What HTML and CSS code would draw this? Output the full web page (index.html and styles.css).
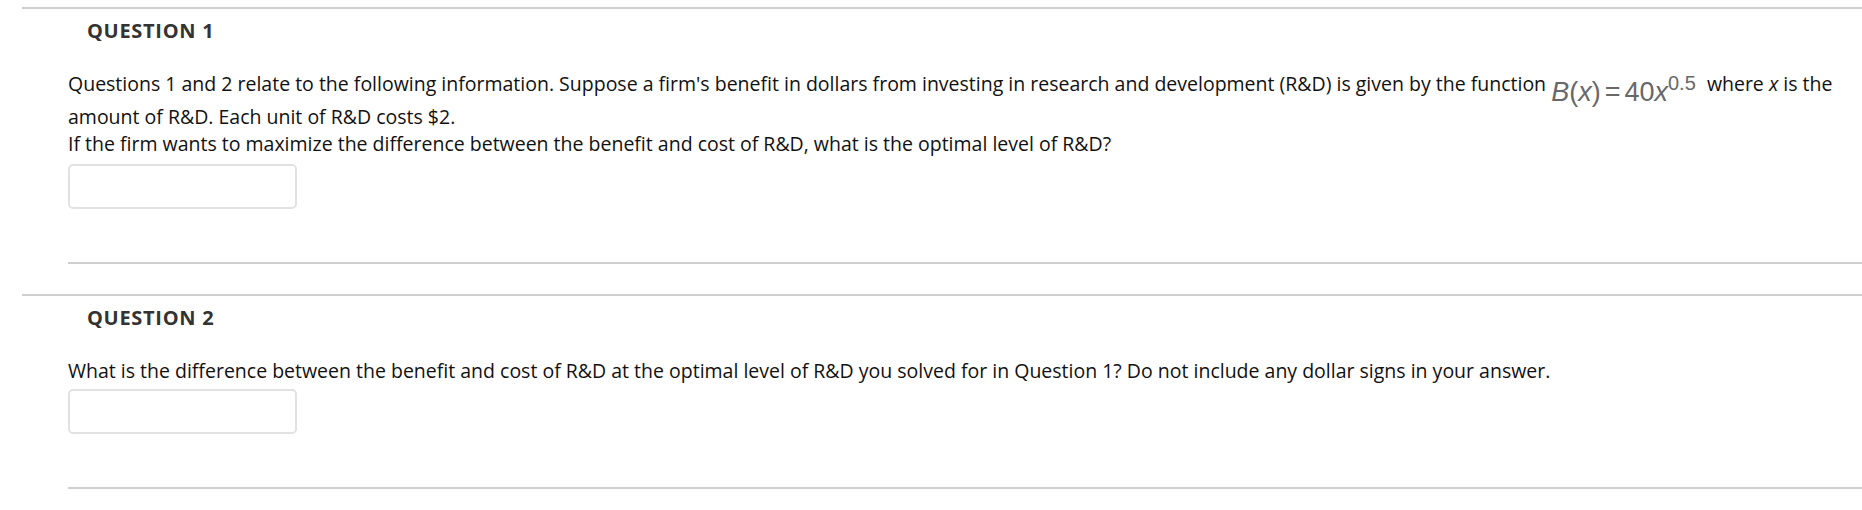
FILE: index.html
```html
<!DOCTYPE html>
<html lang="en">
<head>
<meta charset="utf-8">
<title>Questions</title>
<link rel="stylesheet" href="styles.css">
</head>
<body>
  <section class="question">
    <h3 class="q-title">QUESTION 1</h3>
    <div class="q-body">
      <p class="q-line">Questions 1 and 2 relate to the following information. Suppose a firm's benefit in dollars from investing in research and development (R&amp;D) is given by the function <span class="math"><i>B</i>(<i>x</i>)<span class="eq">=</span>40<i>x</i><sup class="exp">0.5</sup></span> where <i>x</i> is the amount of R&amp;D. Each unit of R&amp;D costs $2.</p>
      <p class="q-line q-line-next">If the firm wants to maximize the difference between the benefit and cost of R&amp;D, what is the optimal level of R&amp;D?</p>
      <input class="answer" type="text" aria-label="Answer to question 1">
      <div class="q-sep"></div>
    </div>
  </section>
  <section class="question">
    <h3 class="q-title">QUESTION 2</h3>
    <div class="q-body">
      <p class="q-line">What is the difference between the benefit and cost of R&amp;D at the optimal level of R&amp;D you solved for in Question 1? Do not include any dollar signs in your answer.</p>
      <input class="answer answer-2" type="text" aria-label="Answer to question 2">
      <div class="q-sep"></div>
    </div>
  </section>
</body>
</html>
```

FILE: styles.css
```css
html, body {
  margin: 0;
  padding: 0;
  background: #ffffff;
}

body {
  font-family: "Open Sans", "Noto Sans", sans-serif;
  color: #111111;
  padding-top: 7px;
}

.question {
  margin-left: 22px;
  border-top: 2px solid #cfcfcf;
  margin-bottom: 30px;
}

.q-title {
  margin: 10px 0 0 0;
  padding-left: 65px;
  font-size: 20px;
  line-height: 24px;
  letter-spacing: 0.7px;
  font-weight: 700;
  color: #333333;
}

.q-body {
  padding-left: 46px;
}

.q-line {
  margin: 29px 0 0 0;
  font-size: 19.5px;
  line-height: 24px;
}

.q-line-next {
  margin-top: 3px;
}

.math {
  font-family: "Liberation Sans", Arial, sans-serif;
  font-size: 27px;
  line-height: 26px;
  color: #686868;
  vertical-align: -10px;
  margin-right: 6px;
}

.math i {
  font-style: italic;
}

.eq {
  margin: 0 4px;
}

.exp {
  font-size: 20px;
  line-height: 20px;
  vertical-align: 11px;
}

.answer {
  display: block;
  box-sizing: border-box;
  width: 229px;
  height: 45px;
  margin: 8px 0 53px 0;
  border: 2px solid #e2e2e2;
  border-radius: 5px;
  background: #ffffff;
  outline: none;
  font: inherit;
}

.answer-2 {
  margin-top: 6px;
}

.q-sep {
  border-top: 2px solid #cfcfcf;
}
```
